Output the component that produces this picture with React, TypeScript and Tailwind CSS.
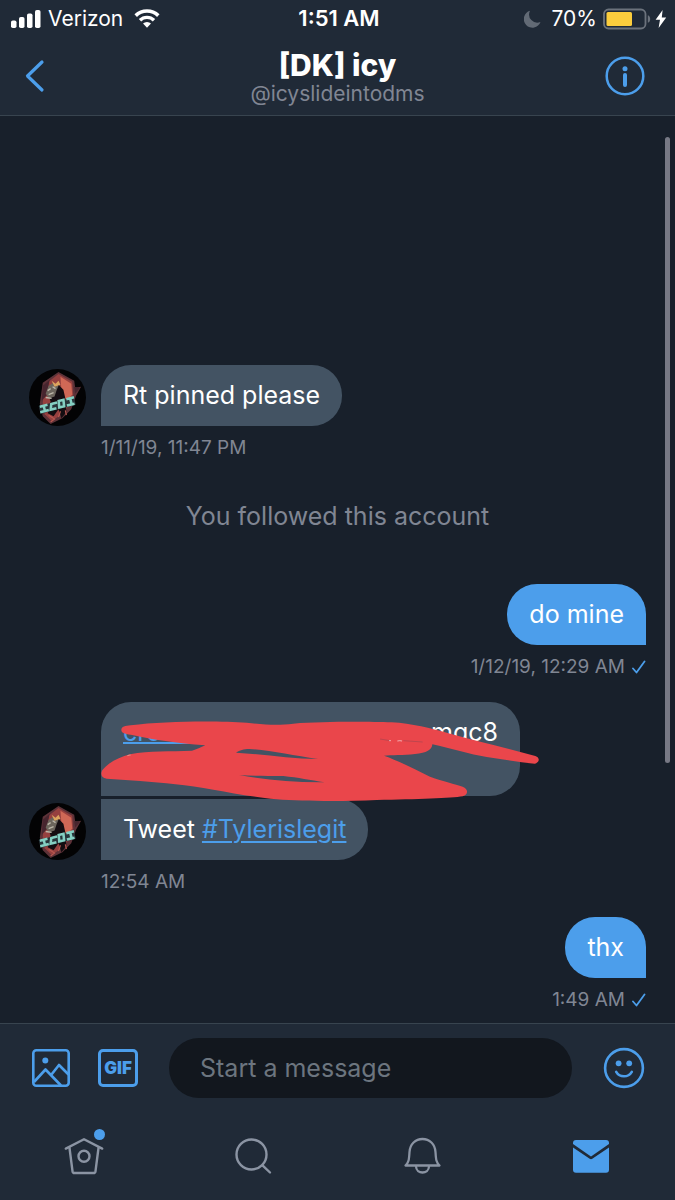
import type { ReactNode } from "react"

function SignalIcon() {
  return (
    <svg width="30" height="18" viewBox="0 0 30 18" fill="white" aria-hidden="true">
      <rect x="0" y="10.5" width="5.5" height="7.5" rx="1.8" />
      <rect x="8" y="7" width="5.5" height="11" rx="1.8" />
      <rect x="16" y="3.5" width="5.5" height="14.5" rx="1.8" />
      <rect x="24" y="0" width="5.5" height="18" rx="1.8" />
    </svg>
  )
}

function WifiIcon() {
  return (
    <svg width="26" height="19" viewBox="0 0 26 19" fill="none" aria-hidden="true">
      <path d="M1.7 6.6a16.2 16.2 0 0 1 22.6 0" stroke="white" strokeWidth="3.6" />
      <path d="M6 11.2a10 10 0 0 1 14 0" stroke="white" strokeWidth="3.4" />
      <path d="M13 18.8l-4-4.2a5.8 5.8 0 0 1 8 0z" fill="white" />
    </svg>
  )
}

function MoonIcon() {
  return (
    <svg width="17" height="18" viewBox="0 0 17 18" fill="#626a75" aria-hidden="true">
      <path d="M6 .8A8.6 8.6 0 1 0 16.5 12 8.2 8.2 0 0 1 6 .8z" />
    </svg>
  )
}

function BatteryIcon() {
  return (
    <svg width="48" height="22" viewBox="0 0 48 22" fill="none" aria-hidden="true">
      <rect x="1" y="1.5" width="41.5" height="19" rx="4.5" stroke="#6b727c" strokeWidth="1.8" />
      <path d="M44.8 7.2c3.2 1 3.2 6.6 0 7.6z" fill="#6b727c" />
      <rect x="3.5" y="4" width="25.5" height="14" rx="1.5" fill="#fbcd3d" />
    </svg>
  )
}

function BoltIcon() {
  return (
    <svg width="12" height="18" viewBox="0 0 12 18" fill="white" aria-hidden="true">
      <path d="M7.6 0L.6 9.8h4.4L3.6 18l7.6-10.6H6.8z" />
    </svg>
  )
}

function Avatar() {
  return (
    <svg className="size-[57px] shrink-0" viewBox="0 0 58 58" role="img" aria-label="[DK] icy">
      <circle cx="29" cy="29" r="29" fill="#030304" />
      <path d="M30 3l16 9 1 7 6-1-5 9-5 14-9 9-12 6-8-8-3-13 3-21z" fill="#5d3238" />
      <path d="M30 5l14 8 1 13-5 12-8 9-9 6-7-7-2-12 2-18z" fill="#96403f" />
      <path d="M32 8l11 7 1 11-6 7-5-11z" fill="#d06856" />
      <path d="M14 17l7-6-3 16-5 5zM46 18l6 1-5 6z" fill="#47252e" />
      <path d="M29 15l6 6 2 9 1 14-5 6-3-9-5 7-6-3 3-12-3-8z" fill="#140d11" />
      <path d="M20 17l5-3 5 3-2 5-2 6-6 2-3-5z" fill="#6c655c" />
      <path d="M23 12l4 3 3-3 2 4-6 2z" fill="#dda45e" />
      <path d="M19 22l3-2M20 26l5-2M24 18l3 2M17 29l6 1" stroke="#beb8aa" strokeWidth="1.3" />
      <path d="M20 47l6 4-4 3M37 42l1 5M32 43l-2 6" stroke="#b95850" strokeWidth="1.2" fill="none" />
      <g transform="rotate(-14 29 36)" fill="none">
        <path d="M10 33h37v8H10z" fill="#28343a" />
        <path d="M11 34h8M10 39.5h9M15 34v5.5M29 34h-6l-2 5.5h6M31 33h5l-1 6.5h-5zM39 33h8M43 33v6M38 39.5h8" stroke="#84cfc2" strokeWidth="2.6" />
      </g>
    </svg>
  )
}

function Scribble() {
  return (
    <svg
      className="pointer-events-none absolute -top-3 -left-[11px] z-10 h-[120px] w-[460px]"
      viewBox="0 0 1380 360"
      aria-hidden="true"
    >
      <path
        fill="#ea464b"
        fillRule="evenodd"
        d="M94 120C94 109 106 108 122 106C220 93 380 92 470 98C535 106 570 106 610 101C700 94 830 95 905 97C965 100 1025 116 1070 128C1130 145 1200 162 1260 178L1336 198C1350 202 1350 218 1334 221C1290 217 1240 208 1190 201C1140 193 1080 175 1027 163C1026 180 1010 189 975 192C940 196 905 195 882 197C930 214 980 241 1020 260C1060 274 1095 282 1118 290C1136 297 1135 314 1118 319C1085 325 980 328 860 330C760 335 640 334 560 328C480 320 430 309 370 299C290 284 220 279 150 273L50 266C32 264 30 248 40 237C62 212 90 202 120 193C180 180 240 186 306 182C320 178 332 172 346 166C260 160 185 148 130 136C110 132 94 131 94 120ZM438 188C450 181 460 177 478 177C540 180 610 197 684 207C600 207 520 193 438 188ZM448 255C490 259 535 257 580 258C625 263 660 270 704 277C610 278 525 269 448 255Z"
      />
      <path d="M870 147l30 5M940 152l58 4" stroke="#a8454f" strokeWidth="2" />
      <path d="M897 152h6M922 153q8-2 14 0" stroke="#f3dfe2" strokeWidth="2" fill="none" />
      <path d="M112 197q6-2 10-2" stroke="#e9b7a6" strokeWidth="2" fill="none" />
    </svg>
  )
}

function Check() {
  return (
    <svg width="14" height="14" viewBox="0 0 14 14" fill="none" aria-label="Sent" role="img">
      <path d="M1 8.5l3.5 4L12.5 1.5" stroke="#4c9eeb" strokeWidth="1.8" strokeLinecap="round" strokeLinejoin="round" />
    </svg>
  )
}

function Received({ time, children }: { time: string; children: ReactNode }) {
  return (
    <div>
      <div className="flex items-end gap-[15px]">
        <Avatar />
        <div className="flex flex-col items-start gap-[3px]">{children}</div>
      </div>
      <p className="mt-[10px] ml-[72px] text-[19px] leading-6 text-[#808693]">{time}</p>
    </div>
  )
}

function Sent({ time, children }: { time: string; children: ReactNode }) {
  return (
    <div className="flex flex-col items-end">
      <div className="rounded-[30px] rounded-br-none bg-[#4c9eeb] px-[22px] py-[14px] text-[25px] leading-[33px] text-white">
        {children}
      </div>
      <p className="mt-[10px] flex items-center gap-[7px] text-[19px] leading-6 text-[#808693]">
        {time}
        <Check />
      </p>
    </div>
  )
}

export default function App() {
  return (
    <div className="flex min-h-screen flex-col bg-[#18202b] font-['Inter',sans-serif] text-white">
      <header className="border-b border-[#38444f] bg-[#202a37]">
        <div className="grid h-[37px] grid-cols-[1fr_auto_1fr] items-center pr-2 pl-[11px] text-[21px]">
          <div className="flex items-center gap-[7px]">
            <SignalIcon />
            <span>Verizon</span>
            <span className="ml-1">
              <WifiIcon />
            </span>
          </div>
          <span className="text-[22px] font-semibold">1:51 AM</span>
          <div className="flex items-center justify-end">
            <MoonIcon />
            <span className="mr-[6px] ml-[11px]">70%</span>
            <BatteryIcon />
            <span className="ml-1">
              <BoltIcon />
            </span>
          </div>
        </div>

        <div className="flex items-center justify-between px-6 py-[10px]">
          <button aria-label="Back" className="flex w-[47px]">
            <svg width="22" height="34" viewBox="0 0 22 34" fill="none">
              <path d="M18 3L3.5 17 18 31" stroke="#4c9eeb" strokeWidth="3.2" strokeLinecap="round" strokeLinejoin="round" />
            </svg>
          </button>
          <div className="text-center">
            <h1 className="text-[30px] leading-9 font-extrabold">[DK] icy</h1>
            <p className="text-[21px] leading-[22px] text-[#808693]">@icyslideintodms</p>
          </div>
          <button aria-label="Info" className="flex w-[47px] justify-end pr-[6px]">
            <svg width="40" height="40" viewBox="0 0 40 40" fill="none">
              <circle cx="20" cy="20" r="18.3" stroke="#4c9eeb" strokeWidth="2.5" />
              <circle cx="20" cy="12.8" r="2.5" fill="#4c9eeb" />
              <path d="M20 19v10" stroke="#4c9eeb" strokeWidth="4" strokeLinecap="round" />
            </svg>
          </button>
        </div>
      </header>

      <main className="relative flex flex-1 flex-col justify-end gap-[23px] px-[29px] pt-6 pb-[11px]">
        <div className="absolute top-[21px] right-[5px] h-[69%] w-[5px] rounded-full bg-[#777985]" />

        <Received time="1/11/19, 11:47 PM">
          <div className="rounded-[30px] rounded-bl-none bg-[#435363] px-[22px] py-[14px] text-[25px] leading-[33px]">
            Rt pinned please
          </div>
        </Received>

        <p className="pt-[17px] pb-[29px] text-center text-[25px] leading-8 text-[#808693]">You followed this account</p>

        <Sent time="1/12/19, 12:29 AM">do mine</Sent>

        <Received time="12:54 AM">
          <div className="relative w-[419px] rounded-[30px] rounded-bl-none bg-[#435363] px-[22px] pt-[14px] pb-[47px] text-[25px] leading-[33px]">
            <div className="flex items-start justify-between">
              <a href="#" className="h-7 w-[120px] border-b-2 border-[#4c9eeb] text-[#4c9eeb]">
                cro
              </a>
              <span>mgc8</span>
            </div>
            <Scribble />
          </div>
          <div className="rounded-r-[30px] bg-[#435363] px-[22px] py-[14px] text-[25px] leading-[33px]">
            Tweet{" "}
            <a href="#" className="text-[#4c9eeb] underline decoration-2 underline-offset-3">
              #Tylerislegit
            </a>
          </div>
        </Received>

        <Sent time="1:49 AM">thx</Sent>
      </main>

      <footer className="border-t border-[#38444f] bg-[#202a37]">
        <form className="flex items-center gap-[31px] pt-[14px] pr-[30px] pl-[31px]">
          <div className="flex items-center gap-[27px]">
            <button type="button" aria-label="Add photo">
              <svg width="40" height="40" viewBox="0 0 40 40" fill="none" stroke="#4c9eeb" strokeWidth="2.6" strokeLinejoin="round">
                <rect x="2.3" y="2.3" width="35.4" height="35.4" rx="3" />
                <path d="M3 34l11.5-12.5L30 37.5M20.5 26.5l7.5-9.5 9.5 9.5" />
                <circle cx="14.3" cy="12.5" r="3" fill="#4c9eeb" stroke="none" />
              </svg>
            </button>
            <button
              type="button"
              className="flex h-[38px] w-10 items-center justify-center rounded-[5px] border-[3px] border-[#4c9eeb] text-[17px] leading-6 font-black text-[#4c9eeb]"
            >
              GIF
            </button>
          </div>
          <input
            type="text"
            aria-label="Start a message"
            placeholder="Start a message"
            className="h-[60px] min-w-0 flex-1 rounded-full bg-[#12171e] px-[31px] text-[25px] text-white outline-none placeholder:text-[#6c757f]"
          />
          <button type="button" aria-label="Emoji">
            <svg width="42" height="42" viewBox="0 0 42 42" fill="none">
              <circle cx="21" cy="21" r="18.9" stroke="#4c9eeb" strokeWidth="2.6" />
              <circle cx="15.6" cy="16.3" r="2.9" fill="#4c9eeb" />
              <circle cx="26.2" cy="16.3" r="2.9" fill="#4c9eeb" />
              <path d="M13.2 24.8c3.5 6 12 6 15.6 0" stroke="#4c9eeb" strokeWidth="2.6" strokeLinecap="round" />
            </svg>
          </button>
        </form>

        <nav className="grid grid-cols-4 justify-items-center pt-[39px] pb-[23px]">
          <a href="#" aria-label="Home" className="relative">
            <svg width="40" height="40" viewBox="0 0 40 40" fill="none" stroke="#8b94a3" strokeWidth="2.4" strokeLinecap="round" strokeLinejoin="round">
              <path d="M1.8 11.6L20 2.2l18.2 9.4" />
              <path d="M5.5 11l3 23.2c.2 1.2.8 1.8 2 1.8h19c1.2 0 1.8-.6 2-1.8l3-23.2" />
              <circle cx="20" cy="19.3" r="5.5" />
            </svg>
            <span className="absolute -top-2 -right-px size-[11px] rounded-full bg-[#4c9eeb]" />
          </a>
          <a href="#" aria-label="Search">
            <svg width="40" height="40" viewBox="0 0 40 40" fill="none" stroke="#8b94a3" strokeWidth="2.4" strokeLinecap="round">
              <circle cx="18.5" cy="17.5" r="15" />
              <path d="M29.5 28.3l7.5 7.2" />
            </svg>
          </a>
          <a href="#" aria-label="Notifications">
            <svg width="40" height="40" viewBox="0 0 40 40" fill="none" stroke="#8b94a3" strokeWidth="2.3" strokeLinecap="round" strokeLinejoin="round">
              <path d="M3.5 28.5c3.5-3.5 3.5-6 4-13.5C8 7 13.5 2 20.5 2S33 7 33.5 15c.5 7.5.5 10 4 13.5z" />
              <path d="M14 29.5c.5 8 12.5 8 13 0" />
            </svg>
          </a>
          <a href="#" aria-label="Messages">
            <svg width="40" height="40" viewBox="0 0 40 40" fill="#4c9eeb">
              <path d="M5 3h30a3 3 0 0 1 3 3v1L20 19.5 2 7V6a3 3 0 0 1 3-3z" />
              <path d="M2 10.5l16.7 11.3a2.4 2.4 0 0 0 2.6 0L38 10.5v22.3a3 3 0 0 1-3 3H5a3 3 0 0 1-3-3z" />
            </svg>
          </a>
        </nav>
      </footer>
    </div>
  )
}
